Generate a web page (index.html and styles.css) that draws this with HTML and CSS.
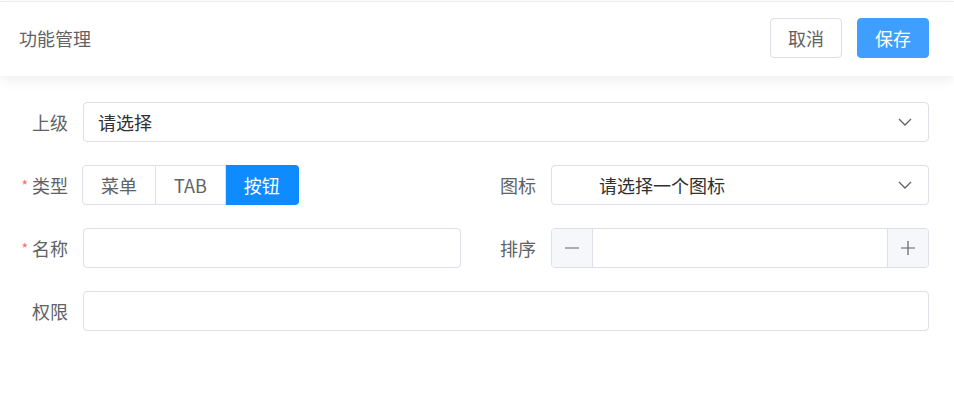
FILE: index.html
```html
<!DOCTYPE html>
<html lang="zh">
<head>
<meta charset="utf-8">
<link rel="stylesheet" href="styles.css">
</head>
<body>
<div class="page">
  <header class="header">
    <div class="title">功能管理</div>
    <div class="actions">
      <button class="btn">取消</button>
      <button class="btn primary">保存</button>
    </div>
  </header>
  <form class="form">
    <div class="row">
      <div class="item full">
        <label class="label">上级</label>
        <div class="control select">
          <span class="value">请选择</span>
          <svg class="arrow" width="14" height="8" viewBox="0 0 14 8"><polyline points="1,1 7,7 13,1" fill="none" stroke="#606266" stroke-width="1.3"/></svg>
        </div>
      </div>
    </div>
    <div class="row">
      <div class="item">
        <label class="label"><span class="req">*</span>类型</label>
        <div class="radio-group">
          <span class="radio">菜单</span>
          <span class="radio">TAB</span>
          <span class="radio active">按钮</span>
        </div>
      </div>
      <div class="item">
        <label class="label">图标</label>
        <div class="control select icon-select">
          <span class="value">请选择一个图标</span>
          <svg class="arrow" width="14" height="8" viewBox="0 0 14 8"><polyline points="1,1 7,7 13,1" fill="none" stroke="#606266" stroke-width="1.3"/></svg>
        </div>
      </div>
    </div>
    <div class="row">
      <div class="item">
        <label class="label"><span class="req">*</span>名称</label>
        <div class="control input"></div>
      </div>
      <div class="item">
        <label class="label">排序</label>
        <div class="control number">
          <span class="step minus"><svg width="16" height="16" viewBox="0 0 16 16"><line x1="1" y1="8" x2="15" y2="8" stroke="#606266" stroke-width="1.2"/></svg></span>
          <span class="num-field"></span>
          <span class="step plus"><svg width="16" height="16" viewBox="0 0 16 16"><line x1="1" y1="8" x2="15" y2="8" stroke="#606266" stroke-width="1.2"/><line x1="8" y1="1" x2="8" y2="15" stroke="#606266" stroke-width="1.2"/></svg></span>
        </div>
      </div>
    </div>
    <div class="row last">
      <div class="item full">
        <label class="label">权限</label>
        <div class="control input"></div>
      </div>
    </div>
  </form>
</div>
</body>
</html>
```
FILE: styles.css
```css
* { box-sizing: border-box; }
html, body { margin: 0; padding: 0; background: #fff; }
body {
  font-family: "Noto Sans CJK SC", "Noto Sans", sans-serif;
  font-size: 18px;
  color: #606266;
}
.page { padding-top: 1px; }
.header {
  border-top: 1px solid #ebebeb;
  display: flex;
  align-items: center;
  justify-content: space-between;
  padding: 16px 25px 18px 19px;
  box-shadow: 0 4px 12px rgba(0, 0, 0, 0.07);
  position: relative;
}
.title { font-size: 18px; color: #606266; line-height: 40px; }
.actions { display: flex; gap: 15px; }
.btn {
  width: 72px;
  height: 40px;
  border: 1px solid #dcdfe6;
  border-radius: 4px;
  background: #fff;
  color: #606266;
  font-family: inherit;
  font-size: 18px;
  padding: 0;
}
.btn.primary { background: #409eff; border-color: #409eff; color: #fff; }
.form { padding: 26px 25px 0 20px; }
.row { display: flex; gap: 27px; margin-bottom: 23px; }
.row.last { margin-top: 1px; }
.item { display: flex; align-items: center; flex: 1 1 0; min-width: 0; }
.item.full { flex: 1 1 auto; }
.label {
  width: 63px;
  flex: none;
  text-align: right;
  padding-right: 15px;
  color: #606266;
  font-size: 18px;
  white-space: nowrap;
}
.req { color: #f56c6c; font-size: 14px; margin-right: 4px; vertical-align: 2px; }
.control {
  flex: 1;
  height: 40px;
  border: 1px solid #dcdfe6;
  border-radius: 4px;
  background: #fff;
}
.select { display: flex; align-items: center; justify-content: space-between; padding: 0 16px 0 14px; }
.select .value { color: #303133; font-size: 18px; }
.icon-select { padding-left: 47px; }
.arrow { flex: none; }
.radio-group { display: flex; height: 40px; margin-left: -1px; }
.radio {
  display: flex;
  align-items: center;
  padding: 0 18px;
  border: 1px solid #dcdfe6;
  border-left: none;
  color: #606266;
  font-size: 18px;
}
.radio:first-child { border-left: 1px solid #dcdfe6; border-radius: 4px 0 0 4px; }
.radio:last-child { border-radius: 0 4px 4px 0; }
.radio.active { background: #0d8bff; border-color: #0d8bff; color: #fff; }
.number { display: flex; overflow: hidden; }
.step {
  width: 41px;
  flex: none;
  background: #f5f7fa;
  display: flex;
  align-items: center;
  justify-content: center;
}
.minus { border-right: 1px solid #dcdfe6; }
.plus { border-left: 1px solid #dcdfe6; }
.num-field { flex: 1; }
```
